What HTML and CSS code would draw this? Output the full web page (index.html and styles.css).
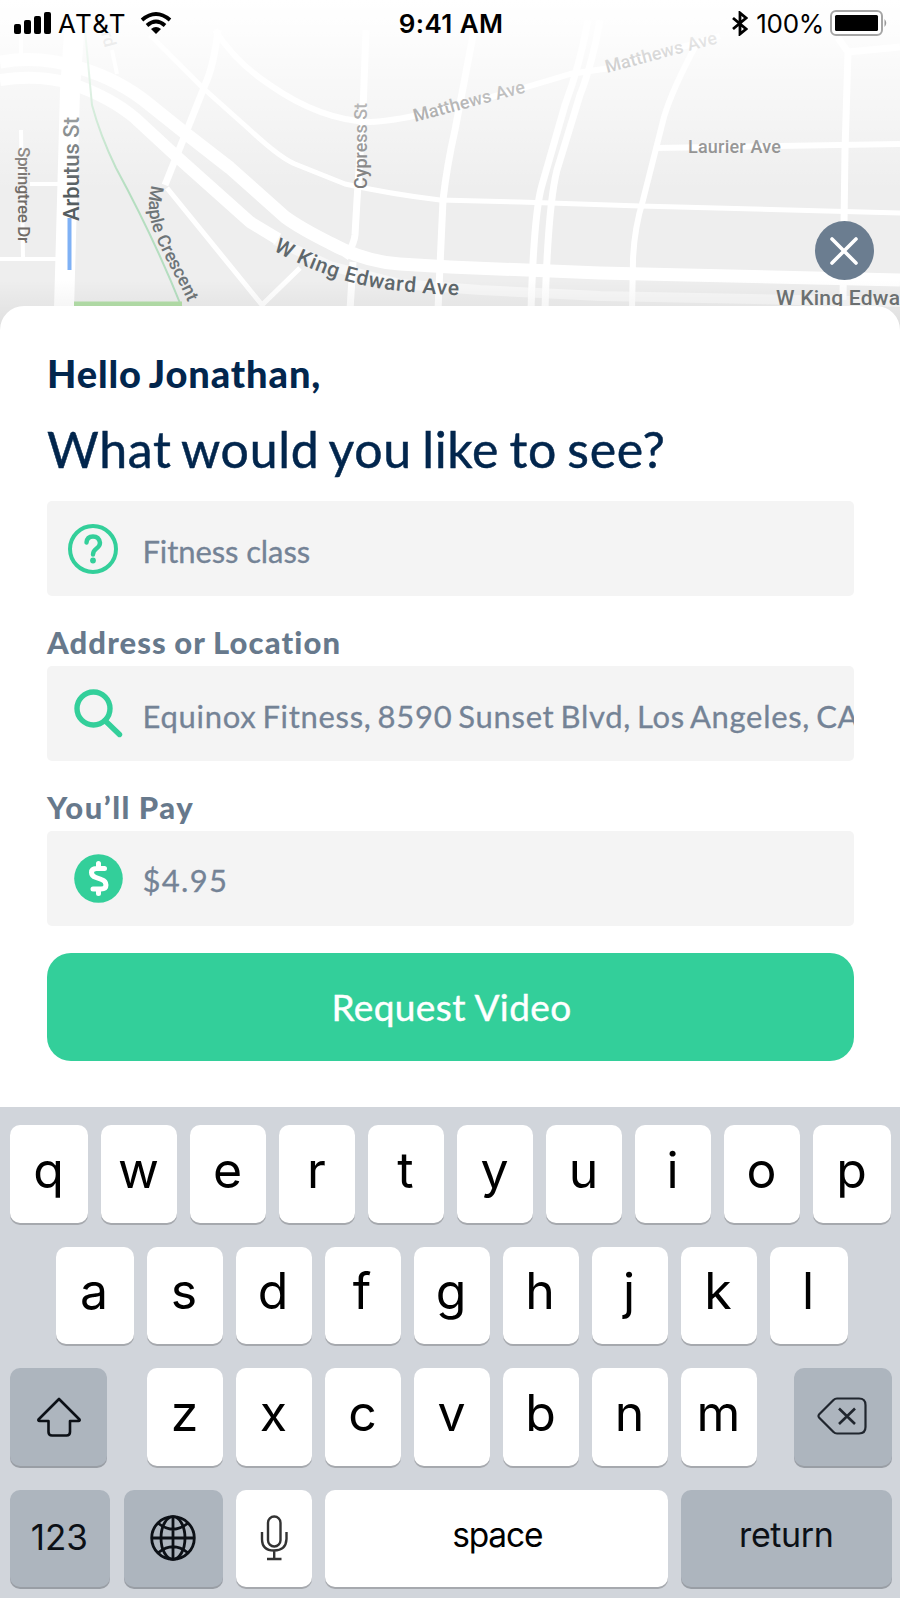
FILE: index.html
```
<!DOCTYPE html>
<html lang="en">
<head>
    <meta charset="UTF-8">
    <meta name="viewport" content="width=device-width, initial-scale=1.0">
    <title>Request Video</title>
    <link rel="stylesheet" href="styles.css">
</head>
<body>
    <div class="screen">
        <div class="map">
            <svg class="map-art" viewBox="0 0 900 340">
                <defs>
                    <linearGradient id="fade" x1="0" y1="0" x2="0" y2="1">
                        <stop offset="0" stop-color="#fff"/>
                        <stop offset="0.15" stop-color="#fff" stop-opacity="0.9"/>
                        <stop offset="1" stop-color="#fff" stop-opacity="0"/>
                    </linearGradient>
                    <linearGradient id="shade" x1="0" y1="0" x2="0" y2="1">
                        <stop offset="0" stop-color="#000" stop-opacity="0"/>
                        <stop offset="1" stop-color="#000" stop-opacity="0.08"/>
                    </linearGradient>
                    <path id="maple" d="M152 185 C144 212 153 232 163 253 S182 286 191 310"/>
                    <path id="king" d="M273 250 Q335 285 400 291 T470 295"/>
                </defs>
                <rect width="900" height="340" fill="#eeeeee"/>

                <!-- roads -->
                <g fill="none" stroke="#fff" stroke-width="7" stroke-linejoin="round">
                    <path d="M275 240 L330 266 L400 284 L480 290 L600 296 L900 302" stroke-width="10" opacity="0.5"/>
                    <path d="M0 62 Q40 55 80 68 Q120 80 150 105 L185 133 L230 168 L285 217 Q300 228 330 243 Q365 262 400 264 L450 267 L600 273 L900 280" stroke-width="13"/>
                    <path d="M0 80 Q40 74 72 84 Q110 97 135 118 L175 155 L250 222 L278 239" stroke-width="12"/>
                    <path d="M75 20 L70 90 L64 310" stroke-width="20"/>
                    <path d="M218 30 Q214 65 205 85 L187 130 L165 185"/>
                    <path d="M167 188 L262 305 L300 268" stroke-width="5"/>
                    <path d="M215 30 Q235 62 270 85 Q320 120 370 122 Q420 120 570 74 L610 68 L720 36" stroke-width="6"/>
                    <path d="M150 35 L203 88 L250 130 Q280 158 295 164 L345 184 Q390 194 440 200 L520 202 L640 206 L900 213" stroke-width="5"/>
                    <path d="M366 30 L363 110 L357 200 L355 235 Q354 245 345 258 M353 262 L350 310"/>
                    <path d="M474 30 L455 130 Q447 165 443 200 L438 310"/>
                    <path d="M588 20 Q580 65 565 105 L542 185 Q534 212 531 310"/>
                    <path d="M600 20 Q592 65 580 95 L557 170 Q548 205 545 310"/>
                    <path d="M696 45 Q672 90 664 117 L643 200 Q634 230 633 260 L632 310" stroke-width="6"/>
                    <path d="M655 148 L900 144" stroke-width="6"/>
                    <path d="M838 38 L848 52 L900 47 M848 52 L845 150 L843 300"/>
                    <path d="M21 60 V20 M21 130 L23 258 M0 259 H58 M30 184 H58" stroke-width="4"/>
                    <path d="M112 50 L117 74" stroke-width="4"/>
                </g>
                <path d="M85 30 L92 105 Q100 135 116 168 Q155 240 182 308" fill="none" stroke="#b5dec0" stroke-width="2"/>
                <path d="M74 304 H182" stroke="#b4dfa9" stroke-width="5"/>
                <path d="M69.500 218 V270" stroke="#7fb1f5" stroke-width="4"/>

                <!-- street names -->
                <g class="street">
                    <text transform="translate(79 221) rotate(-90)" font-size="22" textLength="104" fill="#555d60">Arbutus St</text>
                    <text transform="translate(18 147) rotate(90)" font-size="17" textLength="96" fill="#716c68">Springtree Dr</text>
                    <text transform="translate(367 189) rotate(-90)" font-size="18" textLength="86" fill="#777">Cypress St</text>
                    <text font-size="18" textLength="126" fill="#6e7578"><textPath href="#maple">Maple Crescent</textPath></text>
                    <text transform="translate(415 122) rotate(-15)" font-size="18" textLength="115" fill="#777">Matthews Ave</text>
                    <text transform="translate(607 73) rotate(-15)" font-size="18" textLength="115" fill="#666">Matthews Ave</text>
                    <text x="688" y="153" font-size="18" textLength="93" fill="#777">Laurier Ave</text>
                    <text transform="translate(101 33) rotate(75)" font-size="17" fill="#999">rd</text>
                    <text font-size="21" textLength="193" fill="#5f686c"><textPath href="#king">W King Edward Ave</textPath></text>
                    <text x="776" y="305" font-size="21" textLength="124" fill="#6e7374">W King Edwa</text>
                </g>
                <rect width="900" height="190" fill="url(#fade)"/>
                <rect y="280" width="900" height="60" fill="url(#shade)"/>
            </svg>

            <div class="status-bar">
                <div class="status-left">
                    <svg width="38" height="24" viewBox="0 0 38 24">
                        <rect x="0" y="13" width="7" height="10" rx="2"/>
                        <rect x="10" y="9" width="7" height="14" rx="2"/>
                        <rect x="20" y="5" width="7" height="18" rx="2"/>
                        <rect x="30" y="1" width="7" height="22" rx="2"/>
                    </svg>
                    <span class="carrier">AT&amp;T</span>
                    <svg width="32" height="22" viewBox="0 0 32 22" fill="none" stroke="#000" stroke-width="3.800">
                        <path d="M2 8 Q16 -4 30 8"/>
                        <path d="M7 13.500 Q16 5.500 25 13.500"/>
                        <path d="M11 17 Q16 13 21 17 L16 22 Z" fill="#000" stroke="none"/>
                    </svg>
                </div>
                <div class="time">9:41 AM</div>
                <div class="status-right">
                    <svg width="16" height="25" viewBox="0 0 16 25" fill="none" stroke="#000" stroke-width="2.800">
                        <path d="M1 7 L14 18 L8 23 V2 L14 7 L1 18"/>
                    </svg>
                    <span class="percent">100%</span>
                    <svg width="58" height="26" viewBox="0 0 58 26">
                        <rect x="1" y="1" width="51" height="24" rx="5" fill="#fff" stroke="#a5a5a5" stroke-width="2"/>
                        <rect x="5" y="5" width="43" height="16" rx="1.500"/>
                        <path d="M54.500 9 Q58 13 54.500 17 Z" fill="#999"/>
                    </svg>
                </div>
            </div>

            <button class="close" aria-label="Close">
                <svg width="28" height="28" viewBox="0 0 28 28" stroke="#fff" stroke-width="3.600" stroke-linecap="round">
                    <path d="M2 2 L26 26 M26 2 L2 26"/>
                </svg>
            </button>
        </div>

        <div class="sheet">
            <h2>Hello Jonathan,</h2>
            <h1>What would you like to see?</h1>
            <div class="field">
                <svg class="icon-help" width="50" height="50" viewBox="0 0 50 50" fill="none" stroke="#33cf9a" stroke-width="4">
                    <circle cx="25" cy="25" r="23"/>
                    <path d="M18.500 18.500 Q19 12.500 25 12.500 T32 18.800 Q32 22 28.500 24.500 Q25 27 25 30.500" stroke-width="4.400" stroke-linecap="round"/>
                    <circle cx="25" cy="36.500" r="2.900" fill="#33cf9a" stroke="none"/>
                </svg>
                <span class="what">Fitness class</span>
            </div>

            <h3 class="label-address">Address or Location</h3>
            <div class="field">
                <svg class="icon-search" width="49" height="49" viewBox="0 0 49 49" fill="none" stroke="#33cf9a" stroke-width="5.400">
                    <circle cx="19.500" cy="19.500" r="16.500"/>
                    <path d="M31 31.500 L45.500 45.500" stroke-linecap="round"/>
                </svg>
                <span class="address">Equinox Fitness, 8590 Sunset Blvd, Los Angeles, CA</span>
            </div>

            <h3 class="label-pay">You’ll Pay</h3>
            <div class="field">
                <svg class="icon-pay" width="49" height="49" viewBox="0 0 49 49">
                    <circle cx="24.500" cy="24.500" r="24.300" fill="#33cf9a"/>
                    <path d="M30.500 14.500 H22.500 Q17.500 14.500 17.500 18.500 Q17.500 22 22 23.500 L27.500 25.500 Q32 27 32 31 Q32 35 27 35 H19 M24.500 9.500 V14 M24.500 35 V39.500" fill="none" stroke="#fff" stroke-width="5" stroke-linecap="round"/>
                </svg>
                <span class="price">$4.95</span>
            </div>

            <button class="request">Request Video</button>
        </div>

        <div class="keyboard">
            <div class="row row-1">
                <div class="key edge">q</div>
                <div class="key">w</div>
                <div class="key">e</div>
                <div class="key">r</div>
                <div class="key">t</div>
                <div class="key">y</div>
                <div class="key">u</div>
                <div class="key">i</div>
                <div class="key">o</div>
                <div class="key edge">p</div>
            </div>
            <div class="row row-2">
                <div class="key edge">a</div>
                <div class="key">s</div>
                <div class="key">d</div>
                <div class="key">f</div>
                <div class="key">g</div>
                <div class="key">h</div>
                <div class="key">j</div>
                <div class="key">k</div>
                <div class="key edge">l</div>
            </div>
            <div class="row row-3">
                <div class="key dark shift">
                    <svg width="44" height="40" viewBox="0 0 44 40" fill="none" stroke="#0c1016" stroke-width="2.600" stroke-linejoin="round">
                        <path d="M22 2 L42.500 22.500 Q43 24 41.500 24 H33 V35 Q33 38.500 29.500 38.500 H15 Q11.500 38.500 11.500 35 V24 H2.500 Q1 24 1.500 22.500 Z"/>
                    </svg>
                </div>
                <div class="key">z</div>
                <div class="key">x</div>
                <div class="key">c</div>
                <div class="key">v</div>
                <div class="key">b</div>
                <div class="key">n</div>
                <div class="key">m</div>
                <div class="key dark delete">
                    <svg width="50" height="38" viewBox="0 0 50 38" fill="none" stroke="#20262e" stroke-width="2.200" stroke-linejoin="round">
                        <path d="M20 1.500 H42 Q48.500 1.500 48.500 8 V30 Q48.500 36.500 42 36.500 H20 Q18 36.500 16.500 35 L2 20.500 Q1 19 2 17.500 L16.500 3 Q18 1.500 20 1.500 Z"/>
                        <path d="M22 11.500 L38 27 M38 11.500 L22 27" stroke-width="2.600"/>
                    </svg>
                </div>
            </div>
            <div class="row row-4">
                <div class="key dark numbers">123</div>
                <div class="key dark globe">
                    <svg width="46" height="46" viewBox="0 0 46 46" fill="none" stroke="#0c1016" stroke-width="2.800">
                        <circle cx="23" cy="23" r="21.300"/>
                        <ellipse cx="23" cy="23" rx="12" ry="21.300"/>
                        <path d="M23 2 V44 M2 23 H44 M8.500 8.500 Q23 20 37.500 8.500 M8.500 37.500 Q23 26 37.500 37.500"/>
                    </svg>
                </div>
                <div class="key mic">
                    <svg width="28" height="46" viewBox="0 0 28 46" fill="none" stroke="#333" stroke-width="2.400">
                        <rect x="8" y="1.500" width="12.500" height="30" rx="6.200"/>
                        <path d="M2 17 V24 Q2 35.500 14 35.500 T26.500 24 V17 M14.200 35.500 V44 M7 44 H21.500"/>
                    </svg>
                </div>
                <div class="key space">space</div>
                <div class="key dark return">return</div>
            </div>
        </div>
    </div>
</body>
</html>
```
FILE: styles.css
```
* {
    box-sizing: border-box;
}

body {
    margin: 0;
    background: #fff;
    font-family: Lato, sans-serif;
}

h1, h2, h3 {
    margin: 0;
    white-space: nowrap;
}

button {
    border: none;
    padding: 0;
    cursor: pointer;
}

.screen {
    width: 900px;
    height: 1598px;
    overflow: hidden;
    display: flex;
    flex-direction: column;
}

/* Map */
.map {
    position: relative;
    height: 340px;
    flex: none;
}

.map-art {
    position: absolute;
    top: 0;
    left: 0;
    width: 900px;
    height: 340px;
}

.street {
    font-family: Roboto, sans-serif;
    font-weight: 500;
}

.status-bar {
    position: relative;
    height: 46px;
    padding: 0 12px 0 14px;
    display: grid;
    grid-template-columns: 1fr auto 1fr;
    align-items: center;
    font-family: Inter, sans-serif;
    font-size: 26px;
    color: #000;
}

.status-left, .status-right {
    display: flex;
    align-items: center;
}

.status-right {
    justify-content: flex-end;
}

.carrier {
    margin: 1px 13px 0 6px;
    letter-spacing: 1.3px;
}

.time {
    padding-top: 1px;
    font-weight: 600;
    letter-spacing: 0.4px;
}

.percent {
    margin: 1px 6px 0 8px;
    letter-spacing: -0.3px;
}

.close {
    position: absolute;
    top: 221px;
    left: 814.5px;
    width: 59px;
    height: 59px;
    border-radius: 50%;
    background: #6b7d90;
    display: flex;
    align-items: center;
    justify-content: center;
}

/* Form */
.sheet {
    position: relative;
    height: 801px;
    flex: none;
    margin-top: -34px;
    padding: 43px 46px 0 47px;
    background: #fff;
    border-radius: 24px 24px 0 0;
}

h2 {
    font-size: 38px;
    font-weight: 900;
    line-height: 48px;
    letter-spacing: 0.9px;
    word-spacing: -2px;
    color: #02264d;
}

h1 {
    margin-top: 22px;
    font-size: 50px;
    font-weight: 400;
    line-height: 60px;
    letter-spacing: 0.7px;
    word-spacing: -3.2px;
    -webkit-text-stroke: 0.5px #02264d;
    color: #02264d;
}

h3 {
    font-size: 31px;
    font-weight: 900;
    line-height: 36px;
    letter-spacing: 1.1px;
    word-spacing: -1px;
    color: #67798c;
}

.label-address {
    margin: 28px 0 6px;
}

.label-pay {
    margin: 28px 0 6px;
    letter-spacing: 1.5px;
}

h1 + .field {
    margin-top: 22px;
}

.field {
    height: 95px;
    display: flex;
    align-items: center;
    overflow: hidden;
    border-radius: 5px;
    background: #f4f4f4;
    font-size: 31px;
    color: #748396;
    white-space: nowrap;
}

.field svg {
    flex: none;
}

.field span {
    padding-top: 4px;
    -webkit-text-stroke: 0.3px #748396;
}

.what {
    letter-spacing: -0.1px;
}

.address {
    letter-spacing: 0.7px;
    word-spacing: -2.6px;
}

.field .price {
    padding-top: 2px;
    letter-spacing: 1.3px;
}

.icon-help {
    margin: 0 25px 0 20.5px;
}

.icon-search, .icon-pay {
    margin: 0 19.5px 0 27px;
}

.request {
    display: block;
    width: 100%;
    height: 108px;
    margin-top: 27px;
    padding-bottom: 1px;
    border-radius: 24px;
    background: #33cf9a;
    color: #fff;
    font-family: Lato, sans-serif;
    font-size: 37px;
    letter-spacing: 0.4px;
    text-indent: 2px;
    -webkit-text-stroke: 0.4px #fff;
}

/* Keyboard */
.keyboard {
    flex: 1;
    padding-top: 18px;
    background: #d1d5db;
    display: flex;
    flex-direction: column;
    gap: 24px;
    font-family: Inter, sans-serif;
}

.row {
    display: flex;
    gap: 13px;
    height: 97.5px;
    flex: none;
}

.row-1 {
    padding-left: 10px;
}

.row-2 {
    padding-left: 55.5px;
}

.row-3, .row-4 {
    padding-left: 10px;
}

.key {
    width: 76px;
    flex: none;
    padding: 0 1px 8px 0;
    display: flex;
    align-items: center;
    justify-content: center;
    border-radius: 10px;
    background: #fff;
    box-shadow: 0 2px 0 #a6a9ae;
    font-size: 50px;
    line-height: 1;
    color: #000;
}

.edge {
    width: 78px;
}

.dark {
    background: #adb5be;
    box-shadow: 0 2px 0 #999ea5;
    color: #0c1016;
}

.shift {
    width: 97px;
    margin-right: 27px;
    padding: 0;
}

.delete {
    width: 98px;
    margin-left: 24px;
    padding: 0 2px 2px 0;
}

.numbers {
    width: 99.5px;
    padding-bottom: 1px;
    font-size: 35px;
}

.globe {
    width: 98.5px;
    margin-left: 1.5px;
    padding: 0 1px 0 0;
}

.mic {
    padding: 0;
}

.space {
    width: 343.5px;
    padding: 0 0 6px 2px;
    font-size: 33.5px;
    letter-spacing: -1.2px;
}

.return {
    width: 210.5px;
    padding: 0 0 6px;
    font-size: 34px;
    letter-spacing: -0.4px;
}
```
